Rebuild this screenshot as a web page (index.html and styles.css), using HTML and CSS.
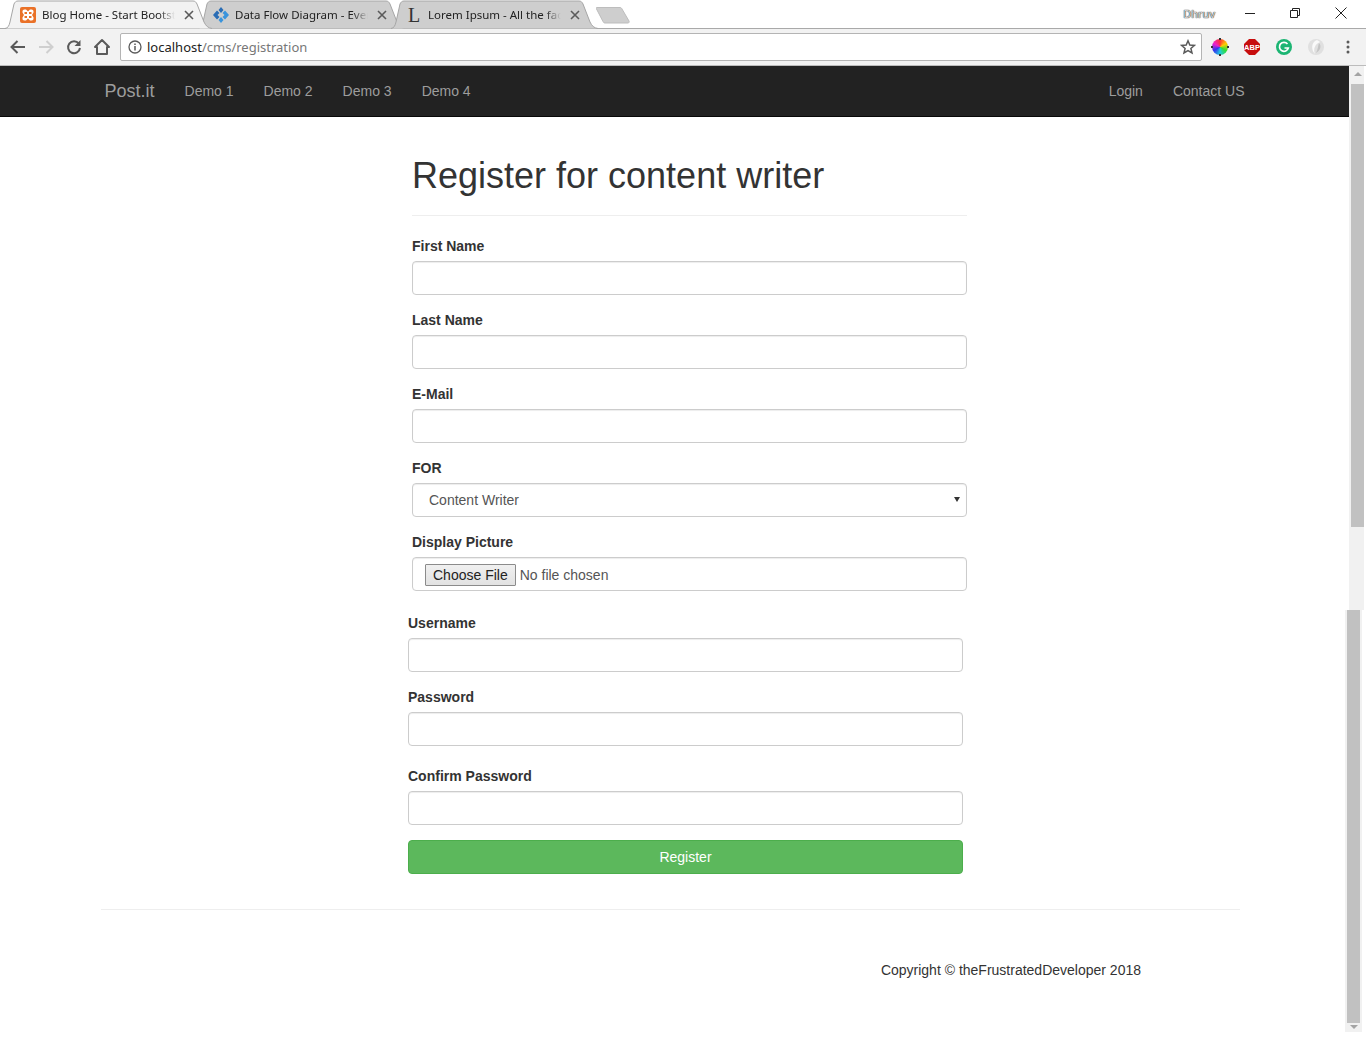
FILE: index.html
```html
<!DOCTYPE html>
<html lang="en">
<head>
    <meta charset="UTF-8">
    <meta name="viewport" content="width=device-width, initial-scale=1.0">
    <title>Register for content writer</title>
    <link rel="stylesheet" href="styles.css">
</head>
<body>
    <!-- Browser frame -->
    <div class="titlebar">
        <div class="tabs">
            <div class="tab tab-active">
                <svg class="tab-shape" viewBox="0 0 207 29"><path d="M0 28.5 C3 28 4 26 5 22 L9 4 C10 2 11 1 13 1 H188 C190 1 191 2 192 4 L199 22 C201 26 203 28 207 28.5" fill="#f2f2f2" stroke="#a6a6a6"/></svg>
                <svg class="favicon" viewBox="0 0 16 16"><rect width="16" height="16" rx="2" fill="#ea7127"/><path d="M4.500 2.500 H6 L8 4.500 L10 2.500 H11.500 C13 2.500 13.500 3.500 13.500 4.500 V5.500 L12 8 L13.500 10.500 V11.500 C13.500 12.500 13 13.500 11.500 13.500 H10 L8 11.500 L6 13.500 H4.500 C3 13.500 2.500 12.500 2.500 11.500 V10.500 L4 8 L2.500 5.500 V4.500 C2.500 3.500 3 2.500 4.500 2.500 Z" fill="#fff"/><rect x="4.500" y="5" width="2.500" height="2" fill="#ea7127"/><rect x="9" y="5" width="2.500" height="2" fill="#ea7127"/><rect x="4.500" y="9" width="2.500" height="2" fill="#ea7127"/><rect x="9" y="9" width="2.500" height="2" fill="#ea7127"/></svg>
                <span class="tab-title">Blog Home - Start Bootst</span>
                <svg class="tab-close" viewBox="0 0 10 10"><path d="M1 1 L9 9 M9 1 L1 9" stroke="#5a5a5a" stroke-width="1.6"/></svg>
            </div>
            <div class="tab">
                <svg class="tab-shape" viewBox="0 0 207 29"><path d="M0 28.5 C3 28 4 26 5 22 L9 4 C10 2 11 1 13 1 H188 C190 1 191 2 192 4 L199 22 C201 26 203 28 207 28.5" fill="#cecece" stroke="#a6a6a6"/></svg>
                <svg class="favicon" viewBox="0 0 16 16"><path d="M8 0 L10.500 3 L8 6 L5.500 3 Z M0 8 L4 3.500 L6.500 6 L4.500 8 L6.500 10 L4 12.500 Z" fill="#2a6db5"/><path d="M16 8 L12 3.500 L9.500 6 L11.500 8 L9.500 10 L12 12.500 Z M8 16 L10.500 13 L8 10 L5.500 13 Z" fill="#3a94dc"/></svg>
                <span class="tab-title">Data Flow Diagram - Ever</span>
                <svg class="tab-close" viewBox="0 0 10 10"><path d="M1 1 L9 9 M9 1 L1 9" stroke="#5a5a5a" stroke-width="1.6"/></svg>
            </div>
            <div class="tab">
                <svg class="tab-shape" viewBox="0 0 207 29"><path d="M0 28.5 C3 28 4 26 5 22 L9 4 C10 2 11 1 13 1 H188 C190 1 191 2 192 4 L199 22 C201 26 203 28 207 28.5" fill="#cecece" stroke="#a6a6a6"/></svg>
                <span class="favicon favicon-letter">L</span>
                <span class="tab-title">Lorem Ipsum - All the fac</span>
                <svg class="tab-close" viewBox="0 0 10 10"><path d="M1 1 L9 9 M9 1 L1 9" stroke="#5a5a5a" stroke-width="1.6"/></svg>
            </div>
            <svg class="new-tab" viewBox="0 0 34 18"><path d="M1 1.5 H24 C25 1.5 25.5 2 26 3 L33 15 C33.500 16 33 17 32 17 H9 C8 17 7.500 16.500 7 15.500 L0.500 3 C0 2 0 1.500 1 1.500 Z" fill="#cecece" stroke="#bdbdbd"/></svg>
        </div>
        <div class="window-controls">
            <span class="user-name">Dhruv</span>
            <svg class="win-btn win-min" viewBox="0 0 12 12"><path d="M1 6.500 H11" stroke="#222"/></svg>
            <svg class="win-btn win-restore" viewBox="0 0 12 12"><path d="M1.500 3.500 H8.500 V10.500 H1.500 Z M3.500 3.500 V1.500 H10.500 V8.500 H8.500" fill="none" stroke="#222"/></svg>
            <svg class="win-btn win-close" viewBox="0 0 12 12"><path d="M0.500 0.500 L11.500 11.500 M11.500 0.500 L0.500 11.500" stroke="#222"/></svg>
        </div>
    </div>

    <div class="toolbar">
        <svg class="tool-icon" viewBox="0 0 28 20"><path d="M21 10 H8 M13.500 4 L7.500 10 L13.500 16" fill="none" stroke="#5a5a5a" stroke-width="2"/></svg>
        <svg class="tool-icon" viewBox="0 0 28 20"><path d="M7 10 H20 M14.500 4 L20.500 10 L14.500 16" fill="none" stroke="#cfcfcf" stroke-width="2"/></svg>
        <svg class="tool-icon" viewBox="0 0 28 20"><path d="M18.800 6.500 A6 6 0 1 0 20 11" fill="none" stroke="#5a5a5a" stroke-width="2"/><path d="M20.500 3 V9 H14.500 Z" fill="#5a5a5a"/></svg>
        <svg class="tool-icon" viewBox="0 0 28 20"><path d="M14 3 L21 10 H19 V17 H9 V10 H7 Z" fill="none" stroke="#5a5a5a" stroke-width="2" stroke-linejoin="round"/></svg>
        <div class="address-bar">
            <svg class="info-icon" viewBox="0 0 14 14"><circle cx="7" cy="7" r="6" fill="none" stroke="#5a5a5a" stroke-width="1.300"/><path d="M7 6 V10.500 M7 3.500 V5" stroke="#5a5a5a" stroke-width="1.500"/></svg>
            <span class="url"><span class="url-host">localhost</span>/cms/registration</span>
            <svg class="star-icon" viewBox="0 0 16 16"><path d="M8 1.800 L9.800 6 L14.400 6.400 L10.900 9.400 L12 13.900 L8 11.500 L4 13.900 L5.100 9.400 L1.600 6.400 L6.200 6 Z" fill="none" stroke="#5a5a5a" stroke-width="1.500"/></svg>
        </div>
        <div class="ext-icon">
            <span class="color-wheel"></span>
        </div>
        <div class="ext-icon">
            <svg viewBox="0 0 16 16" width="16" height="16"><path d="M5 0 H11 L16 5 V11 L11 16 H5 L0 11 V5 Z" fill="#c70d0d"/><text x="8" y="11" class="abp-text">ABP</text></svg>
        </div>
        <div class="ext-icon">
            <svg viewBox="0 0 16 16" width="16" height="16"><circle cx="8" cy="8" r="8" fill="#1cb573"/><path d="M11.500 5 A4.500 4.500 0 1 0 12.300 9 H8.500" fill="none" stroke="#fff" stroke-width="1.700"/></svg>
        </div>
        <div class="ext-icon">
            <svg viewBox="0 0 16 16" width="16" height="16"><circle cx="8" cy="8" r="8" fill="#e0e0e0"/><path d="M9 1 C3 3 3 11 7 15 C5 10 7 5 12 3 Z" fill="#fafafa"/><path d="M11 4 C14 7 12 12 8 14 C10 10 10 7 11 4 Z" fill="#c4c4c4"/></svg>
        </div>
        <div class="ext-icon">
            <svg viewBox="0 0 4 14" width="4" height="14"><circle cx="2" cy="2" r="1.500" fill="#5a5a5a"/><circle cx="2" cy="7" r="1.500" fill="#5a5a5a"/><circle cx="2" cy="12" r="1.500" fill="#5a5a5a"/></svg>
        </div>
    </div>

    <div class="viewport">
        <div class="page">
            <nav class="navbar">
                <div class="navbar-inner">
                    <a class="navbar-brand" href="#">Post.it</a>
                    <a class="nav-link" href="#">Demo 1</a>
                    <a class="nav-link" href="#">Demo 2</a>
                    <a class="nav-link" href="#">Demo 3</a>
                    <a class="nav-link" href="#">Demo 4</a>
                    <a class="nav-link nav-link-first-right" href="#">Login</a>
                    <a class="nav-link" href="#">Contact US</a>
                </div>
            </nav>

            <form class="form-block">
                <div class="page-header">
                    <h1>Register for content writer</h1>
                </div>
                <div class="form-group">
                    <label for="first-name">First Name</label>
                    <input class="form-control" type="text" id="first-name">
                </div>
                <div class="form-group">
                    <label for="last-name">Last Name</label>
                    <input class="form-control" type="text" id="last-name">
                </div>
                <div class="form-group">
                    <label for="email">E-Mail</label>
                    <input class="form-control" type="text" id="email">
                </div>
                <div class="form-group">
                    <label for="role">FOR</label>
                    <div class="select-wrap">
                        <select class="form-control form-select" id="role">
                            <option>Content Writer</option>
                        </select>
                    </div>
                </div>
                <div class="form-group">
                    <label for="picture">Display Picture</label>
                    <input class="form-control form-file" type="file" id="picture">
                </div>
            </form>

            <form class="form-block form-block-lower">
                <div class="form-group">
                    <label for="username">Username</label>
                    <input class="form-control" type="text" id="username">
                </div>
                <div class="form-group">
                    <label for="password">Password</label>
                    <input class="form-control" type="password" id="password">
                </div>
                <div class="form-group form-group-confirm">
                    <label for="confirm">Confirm Password</label>
                    <input class="form-control" type="password" id="confirm">
                </div>
                <button class="btn-register" type="button">Register</button>
            </form>

            <footer class="footer">
                <p>Copyright &copy; theFrustratedDeveloper 2018</p>
            </footer>
        </div>

        <div class="scrollbar">
            <div class="scroll-upper">
                <span class="arrow-up"></span>
                <div class="scroll-thumb scroll-thumb-upper"></div>
            </div>
            <div class="scroll-lower">
                <div class="scroll-thumb scroll-thumb-lower"></div>
                <span class="arrow-down"></span>
            </div>
        </div>
    </div>
</body>
</html>
```

FILE: styles.css
```css
* {
    box-sizing: border-box;
}

body {
    font-family: "Liberation Sans", Arial, sans-serif;
    font-size: 14px;
    line-height: 20px;
    color: #333;
    background-color: #fff;
    margin: 0;
    height: 1054px;
    overflow: hidden;
}

/* Browser frame */
.titlebar {
    height: 29px;
    display: flex;
    justify-content: space-between;
    border-bottom: 1px solid #a9a9a9;
}

.tabs {
    display: flex;
    padding-left: 5px;
    height: 29px;
}

.tab {
    position: relative;
    width: 207px;
    height: 29px;
    margin-right: -14px;
    display: flex;
    align-items: center;
    padding: 1px 0 0 15px;
    font-family: "Noto Sans", sans-serif;
    font-size: 11.5px;
    color: #222;
}

.tab-active {
    z-index: 1;
}

.tab-shape {
    position: absolute;
    left: 0;
    top: 0;
    width: 207px;
    height: 29px;
}

.favicon {
    position: relative;
    width: 16px;
    height: 16px;
    flex: none;
}

.favicon-letter {
    font-family: "Liberation Serif", serif;
    font-size: 20px;
    line-height: 16px;
    color: #333;
    text-align: center;
}

.tab-title {
    position: relative;
    width: 133px;
    margin-left: 6px;
    white-space: nowrap;
    -webkit-mask-image: linear-gradient(to right, #000 88%, transparent);
    mask-image: linear-gradient(to right, #000 88%, transparent);
}

.tab-close {
    position: relative;
    width: 10px;
    height: 10px;
    margin-left: 9px;
    flex: none;
}

.new-tab {
    width: 34px;
    height: 18px;
    margin: 6px 0 0 12px;
}

.window-controls {
    display: flex;
    align-items: center;
    height: 28px;
}

.user-name {
    font-family: "Noto Sans", sans-serif;
    font-size: 11px;
    color: #ddd;
    text-shadow: 0 0 1px #222, 0 0 1px #222;
    margin-right: 29px;
}

.win-btn {
    width: 12px;
    height: 12px;
    flex: none;
    margin-top: -2px;
}

.win-restore {
    margin-left: 33px;
}

.win-close {
    margin-left: 34px;
    margin-right: 19px;
}

.toolbar {
    height: 37px;
    display: flex;
    align-items: center;
    padding: 0 2px 0 4px;
    background-color: #f2f2f2;
    border-bottom: 1px solid #bcbcbc;
}

.tool-icon {
    width: 28px;
    height: 20px;
    flex: none;
}

.address-bar {
    flex: 1;
    height: 28px;
    margin: 0 2px 0 4px;
    display: flex;
    align-items: center;
    padding: 0 5px 0 7px;
    background-color: #fff;
    border: 1px solid #b4b4b4;
    border-radius: 2px;
}

.info-icon {
    width: 14px;
    height: 14px;
    flex: none;
}

.url {
    flex: 1;
    margin-left: 5px;
    font-family: "Noto Sans", sans-serif;
    font-size: 13px;
    color: #777;
}

.url-host {
    color: #222;
}

.star-icon {
    width: 16px;
    height: 16px;
    flex: none;
}

.ext-icon {
    width: 32px;
    height: 20px;
    flex: none;
    display: flex;
    align-items: center;
    justify-content: center;
}

.color-wheel {
    position: relative;
    width: 16px;
    height: 16px;
    border-radius: 50%;
    background: conic-gradient(#f33, #fc0, #3d3, #2cd, #33e, #e2c, #f33);
}

/* the four dark pins round the colour wheel */
.color-wheel::before {
    content: "";
    position: absolute;
    left: 7px;
    top: -1px;
    width: 2px;
    height: 18px;
    background: linear-gradient(#333 0 2px, transparent 2px 16px, #333 16px);
}

.color-wheel::after {
    content: "";
    position: absolute;
    left: -1px;
    top: 7px;
    width: 18px;
    height: 2px;
    background: linear-gradient(to right, #333 0 2px, transparent 2px 16px, #333 16px);
}

.abp-text {
    font-family: "Liberation Sans", sans-serif;
    font-size: 7.5px;
    font-weight: bold;
    fill: #fff;
    text-anchor: middle;
}

/* Page */
.viewport {
    display: flex;
}

.page {
    width: 1349px;
    flex: none;
}

.navbar {
    height: 51px;
    background-color: #222;
    border-bottom: 1px solid #080808;
}

.navbar-inner {
    width: 1170px;
    margin: 0 auto;
    display: flex;
}

.navbar-brand {
    font-size: 18px;
    line-height: 20px;
    padding: 15px;
    color: #9d9d9d;
    text-decoration: none;
}

.nav-link {
    padding: 15px;
    color: #9d9d9d;
    text-decoration: none;
}

.nav-link-first-right {
    margin-left: auto;
}

.form-block {
    width: 555px;
    margin-left: 412px;
}

.form-block-lower {
    margin-left: 408px;
    padding-top: 7px;
}

.page-header {
    margin: 39px 0 20px;
    padding-bottom: 9px;
    border-bottom: 1px solid #eee;
}

h1 {
    font-size: 36px;
    font-weight: 500;
    line-height: 40px;
    margin: 0 0 10px;
}

.form-group {
    margin-bottom: 15px;
}

.form-group-confirm {
    padding-top: 5px;
}

label {
    display: block;
    font-weight: bold;
    margin-bottom: 5px;
}

.form-control {
    display: block;
    width: 100%;
    height: 34px;
    padding: 6px 12px;
    font-family: inherit;
    font-size: 14px;
    color: #555;
    background-color: #fff;
    border: 1px solid #ccc;
    border-radius: 4px;
    box-shadow: inset 0 1px 1px rgba(0, 0, 0, 0.075);
}

.select-wrap {
    position: relative;
}

.select-wrap::after {
    content: "";
    position: absolute;
    right: 7px;
    top: 14px;
    border: 3px solid transparent;
    border-bottom: 0;
    border-top: 5px solid #333;
}

.form-select {
    padding-left: 16px;
    appearance: none;
    -webkit-appearance: none;
}

.form-file {
    color: #555;
    padding: 5px 12px;
}

.form-file::file-selector-button {
    height: 22px;
    margin: 1px 4px 0 0;
    padding: 0 7px;
    font-family: inherit;
    font-size: 14px;
    color: #222;
    background: linear-gradient(#f0f0f0, #e2e2e2);
    border: 1px solid #8b8b8b;
    border-radius: 1px;
}

.btn-register {
    display: block;
    width: 100%;
    height: 34px;
    font-family: inherit;
    font-size: 14px;
    color: #fff;
    background-color: #5cb85c;
    border: 1px solid #4cae4c;
    border-radius: 4px;
    cursor: pointer;
}

.footer {
    width: 1139px;
    margin: 35px 0 0 101px;
    padding: 50px 99px 0 0;
    border-top: 1px solid #eee;
    text-align: right;
}

.footer p {
    margin: 0;
}

/* Scrollbar */
.scrollbar {
    width: 17px;
    flex: none;
}

.scroll-upper {
    width: 15px;
    height: 544px;
    background-color: #f1f1f1;
    padding: 3px 0 0 2px;
}

.scroll-lower {
    width: 17px;
    height: 422px;
    margin-left: -4px;
    background-color: #f1f1f1;
    padding-left: 2px;
}

.arrow-up {
    display: block;
    width: 0;
    margin: 3px auto 8px;
    border: 4px solid transparent;
    border-top: 0;
    border-bottom: 4px solid #a3a3a3;
}

.arrow-down {
    display: block;
    width: 0;
    margin: 2px 0 0 3px;
    border: 4px solid transparent;
    border-bottom: 0;
    border-top: 4px solid #a3a3a3;
}

.scroll-thumb {
    width: 13px;
    background-color: #c1c1c1;
}

.scroll-thumb-upper {
    height: 443px;
}

.scroll-thumb-lower {
    height: 413px;
}
```
